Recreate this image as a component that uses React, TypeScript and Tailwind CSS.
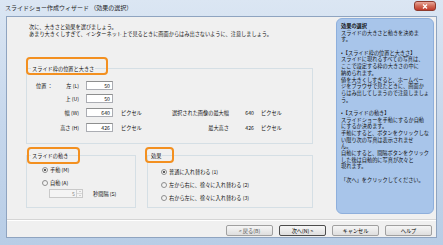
import React from 'react';

const Radio = ({ checked }: { checked?: boolean }) => (
  <span className="w-[6px] h-[6px] rounded-full border border-[#8e8f8f] bg-gradient-to-br from-[#e6e6e6] to-white flex items-center justify-center shrink-0">
    {checked && <span className="w-[2px] h-[2px] rounded-full bg-[#2a2a2a]" />}
  </span>
);

const TextBox = ({ value }: { value: string }) => (
  <div className="w-[27px] h-[9px] bg-white border border-[#abadb3] border-t-[#8e8f8f] flex items-center justify-end pr-[2px] leading-none">
    {value}
  </div>
);

const Btn = ({ label, focus, disabled }: { label: string; focus?: boolean; disabled?: boolean }) => (
  <div
    className={`w-[47px] h-[11px] rounded-[2px] flex items-center justify-center bg-gradient-to-b from-[#f6f6f6] to-[#dedede] border ${
      focus ? 'border-[#4d4d4d]' : 'border-[#a0a0a0]'
    } ${disabled ? 'text-[#555]' : 'text-black'}`}
  >
    {label}
  </div>
);

const helpLines = [
  'スライドの大きさと動きを決めま',
  'す。',
  '',
  '•【スライド枠の位置と大きさ】',
  'スライドに現れるすべての写真は、',
  'ここで設定する枠の大きさの中に',
  '納められます。',
  '値を大きくしすぎると、ホームペー',
  'ジをブラウザで見たときに、画面か',
  'らはみ出してしまうので注意しましょ',
  'う。',
  '',
  '•【スライドの動き】',
  'スライドショーを手動にするか自動',
  'にするか決めます。',
  '手動にすると、ボタンをクリックしな',
  'い限り次の写真は表示されませ',
  'ん。',
  '自動にすると、間隔ボタンをクリック',
  'した後は自動的に写真が次々と',
  '現れます。',
  '',
  '「次へ」をクリックしてください。',
];

const App = () => {
  return (
    <div className="w-[443px] h-[245px] overflow-hidden flex flex-col bg-gradient-to-b from-[#dbe6f3] via-[#c6d7ec] to-[#b8cde6] font-['Noto_Sans_CJK_JP',sans-serif] text-[5.2px] text-[#111]">
      {/* title bar */}
      <div className="h-[16px] shrink-0 flex items-start justify-between pl-[5px] pr-[7px]">
        <span className="text-[6px] leading-none mt-[5px] text-[#1e1e1e]">スライドショー作成ウィザード （効果の選択）</span>
        <div className="mt-[1px] w-[22px] h-[10px] rounded-[3px] border border-[#8d3a2e] bg-gradient-to-b from-[#e8a89c] via-[#d06a57] to-[#c0392b] flex items-center justify-center">
          <svg width="6" height="5" viewBox="0 0 6 5">
            <path d="M1 0.5 L5 4.5 M5 0.5 L1 4.5" stroke="white" strokeWidth="1.3" />
          </svg>
        </div>
      </div>

      {/* client area */}
      <div className="mx-[6px] mb-[7px] h-[222px] bg-[#f0f0f0] border border-[#8fa4c0] flex flex-col">
        <div className="flex h-[202px] shrink-0">
          {/* left content */}
          <div className="w-[329px] relative">
            <div className="pl-[22px] pt-[6px] leading-[7px] whitespace-nowrap">
              <div>次に、大きさと効果を選びましょう。</div>
              <div>あまり大きくしすぎて、インターネット上で見るときに画面からはみ出さないように、注意しましょう。</div>
            </div>

            {/* group 1 */}
            <div className="ml-[19px] mt-[31px] w-[287px] h-[76px] border border-[#d5dfe5] relative">
              <span className="absolute left-[4px] -top-[4px] px-[1px] bg-[#f0f0f0] leading-[7px]">スライド枠の位置と大きさ</span>
              <div className="absolute -left-[1px] -top-[12px] w-[82px] h-[18px] rounded-[4px] border-2 border-[#f39020]" />

              <div className="mt-[12px] flex items-center h-[9px] whitespace-nowrap">
                <div className="ml-[9px] w-[43px] flex justify-between">
                  <span>位置 ：</span>
                  <span>左 (L)</span>
                </div>
                <div className="ml-[7px]"><TextBox value="50" /></div>
              </div>
              <div className="mt-[4px] flex items-center h-[9px] whitespace-nowrap">
                <div className="ml-[9px] w-[43px] text-right">上 (U)</div>
                <div className="ml-[7px]"><TextBox value="50" /></div>
              </div>
              <div className="mt-[5px] flex items-center h-[9px] whitespace-nowrap">
                <div className="ml-[9px] w-[43px] text-right">幅 (W)</div>
                <div className="ml-[7px]"><TextBox value="640" /></div>
                <span className="ml-[8px] w-[22px]">ピクセル</span>
                <span className="w-[86px] text-right">選択された画像の最大幅</span>
                <span className="w-[25px] text-right">640</span>
                <span className="ml-[7px]">ピクセル</span>
              </div>
              <div className="mt-[6px] flex items-center h-[9px] whitespace-nowrap">
                <div className="ml-[9px] w-[43px] text-right">高さ (H)</div>
                <div className="ml-[7px]"><TextBox value="426" /></div>
                <span className="ml-[8px] w-[22px]">ピクセル</span>
                <span className="w-[86px] text-right">最大高さ</span>
                <span className="w-[25px] text-right">426</span>
                <span className="ml-[7px]">ピクセル</span>
              </div>
            </div>

            {/* groups 2 and 3 */}
            <div className="ml-[19px] mt-[11px] flex gap-[11px]">
              <div className="w-[110px] h-[53px] border border-[#d5dfe5] relative whitespace-nowrap">
                <span className="absolute left-[4px] -top-[4px] px-[1px] bg-[#f0f0f0] leading-[7px]">スライドの動き</span>
                <div className="absolute left-0 -top-[9px] w-[53px] h-[17px] rounded-[4px] border-2 border-[#f39020]" />
                <div className="mt-[10px] ml-[15px] flex items-center gap-[2px] h-[7px]">
                  <Radio checked />
                  <span>手動 (M)</span>
                </div>
                <div className="mt-[6px] ml-[15px] flex items-center gap-[2px] h-[7px]">
                  <Radio />
                  <span>自動 (A)</span>
                </div>
                <div className="mt-[3px] flex items-center h-[9px]">
                  <div className="ml-[22px] w-[34px] h-[9px] border border-[#c9c9c9] bg-[#f4f4f4] flex items-stretch">
                    <span className="flex-1 text-right pr-[1px] text-[#888] leading-[7px]">5</span>
                    <div className="w-[6px] border-l border-[#cfcfcf] flex flex-col">
                      <div className="flex-1 border-b border-[#d8d8d8] flex items-center justify-center">
                        <span className="w-0 h-0 border-l-[1.5px] border-r-[1.5px] border-b-[1.5px] border-l-transparent border-r-transparent border-b-[#aaa]" />
                      </div>
                      <div className="flex-1 flex items-center justify-center">
                        <span className="w-0 h-0 border-l-[1.5px] border-r-[1.5px] border-t-[1.5px] border-l-transparent border-r-transparent border-t-[#aaa]" />
                      </div>
                    </div>
                  </div>
                  <span className="ml-[10px]">秒間隔 (S)</span>
                </div>
              </div>

              <div className="w-[166px] h-[53px] border border-[#d5dfe5] relative whitespace-nowrap">
                <span className="absolute left-[2px] -top-[4px] px-[1px] bg-[#f0f0f0] leading-[7px]">効果</span>
                <div className="absolute -left-[3px] -top-[9px] w-[29px] h-[16px] rounded-[4px] border-2 border-[#f39020]" />
                <div className="mt-[12px] ml-[13px] flex items-center gap-[2px] h-[7px]">
                  <Radio checked />
                  <span>普通に入れ替わる (1)</span>
                </div>
                <div className="mt-[6px] ml-[13px] flex items-center gap-[2px] h-[7px]">
                  <Radio />
                  <span>左から右に、徐々に入れ替わる (2)</span>
                </div>
                <div className="mt-[6px] ml-[13px] flex items-center gap-[2px] h-[7px]">
                  <Radio />
                  <span>右から左に、徐々に入れ替わる (3)</span>
                </div>
              </div>
            </div>
          </div>

          {/* help panel */}
          <div className="mt-[1px] w-[98px] h-[196px] rounded-[6px] bg-[#a8c5ea] border border-[#8eafdc] pl-[4px] pt-[4px] leading-[6.7px] whitespace-nowrap text-[#111]">
            <div className="font-bold">効果の選択</div>
            {helpLines.map((l, i) => (
              <div key={i} className="h-[6.7px]">{l}</div>
            ))}
          </div>
        </div>

        <div className="h-0 border-t border-[#d5d5d5] border-b border-b-white" />

        <div className="mt-[4px] flex justify-end gap-[6px] pr-[4px]">
          <Btn label="< 戻る(B)" disabled />
          <Btn label="次へ(N) >" focus />
          <Btn label="キャンセル" />
          <Btn label="ヘルプ" />
        </div>
      </div>
    </div>
  );
};

export default App;
